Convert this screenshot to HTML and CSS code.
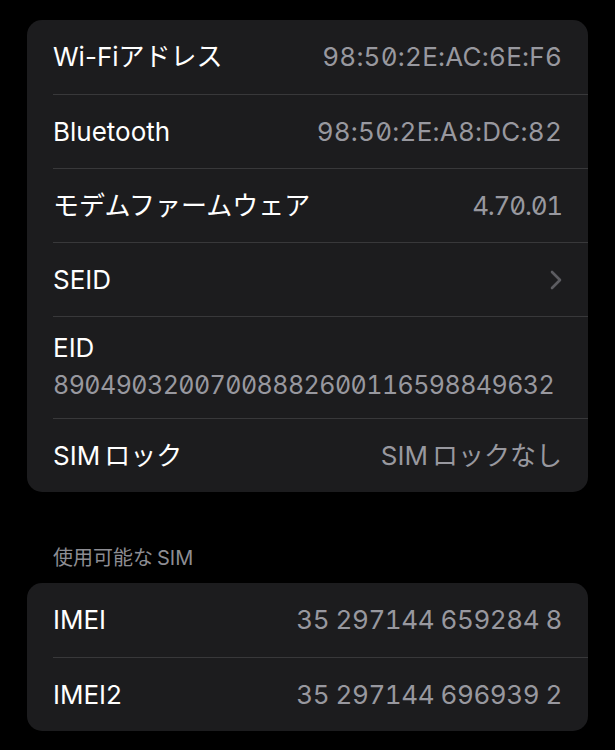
FILE: index.html
```html
<!DOCTYPE html>
<html lang="ja">
<head>
  <meta charset="UTF-8" />
  <meta name="viewport" content="width=device-width, initial-scale=1.0"/>
  <title>情報</title>
  <link rel="stylesheet" href="styles.css">
</head>
<body>
  <div class="settings">
    <div class="card">
      <div class="row">
        <span class="label">Wi-Fiアドレス</span>
        <span class="value mac">98:50:2E:AC:6E:F6</span>
      </div>
      <div class="row">
        <span class="label">Bluetooth</span>
        <span class="value mac">98:50:2E:A8:DC:82</span>
      </div>
      <div class="row">
        <span class="label">モデムファームウェア</span>
        <span class="value version">4.70.01</span>
      </div>
      <div class="row">
        <span class="label">SEID</span>
        <svg class="chevron" width="12" height="20" viewBox="0 0 12 20">
          <polyline points="2,2 10,10 2,18" fill="none" stroke="#5c5c61" stroke-width="2.6" stroke-linecap="round" stroke-linejoin="round"/>
        </svg>
      </div>
      <div class="row stacked">
        <span class="label">EID</span>
        <span class="value eid">89049032007008882600116598849632</span>
      </div>
      <div class="row">
        <span class="label"><span class="spaced">SIM</span>ロック</span>
        <span class="value"><span class="spaced">SIM</span>ロックなし</span>
      </div>
    </div>

    <div class="section-title"><span class="spaced">使用可能な</span>SIM</div>
    <div class="card">
      <div class="row">
        <span class="label">IMEI</span>
        <span class="value imei">35 297144 659284 8</span>
      </div>
      <div class="row">
        <span class="label">IMEI2</span>
        <span class="value imei">35 297144 696939 2</span>
      </div>
    </div>
  </div>
</body>
</html>
```

FILE: styles.css
```css
/* page */
html, body {
  margin: 0;
  padding: 0;
  background: #000;
  color: #fff;
  font-family: Inter, "Noto Sans CJK JP", sans-serif;
}

.settings {
  padding: 20px 27px 0;
}

/* grouped card */
.card {
  background: #1c1c1e;
  border-radius: 15px;
  overflow: hidden;
}

.row {
  display: flex;
  align-items: center;
  justify-content: space-between;
  box-sizing: border-box;
  height: 74px;
  margin-left: 26px;
  padding-right: 26px;
  border-top: 1px solid #38383a;
}
.row:first-child {
  border-top: none;
}

.label {
  font-size: 26px;
  line-height: 30px;
  color: #fff;
}

/* small gap between latin and kana, as iOS does */
.spaced {
  margin-right: 4px;
}

.value {
  font-size: 26px;
  line-height: 30px;
  color: #98989f;
  font-feature-settings: "tnum", "zero";
}
.value.mac {
  letter-spacing: 0.25px;
}
.value.version {
  letter-spacing: -1.2px;
}
.value.imei {
  letter-spacing: -0.45px;
}

.chevron {
  display: block;
}

/* EID: label over value */
.row.stacked {
  flex-direction: column;
  align-items: flex-start;
  justify-content: flex-start;
  height: 102px;
  padding-top: 16px;
  gap: 7px;
}
.value.eid {
  font-size: 25px;
  letter-spacing: -0.55px;
}

/* section header */
.section-title {
  margin: 54px 0 0 26px;
  height: 37px;
  font-size: 20px;
  line-height: 24px;
  color: #8d8d93;
}
```
